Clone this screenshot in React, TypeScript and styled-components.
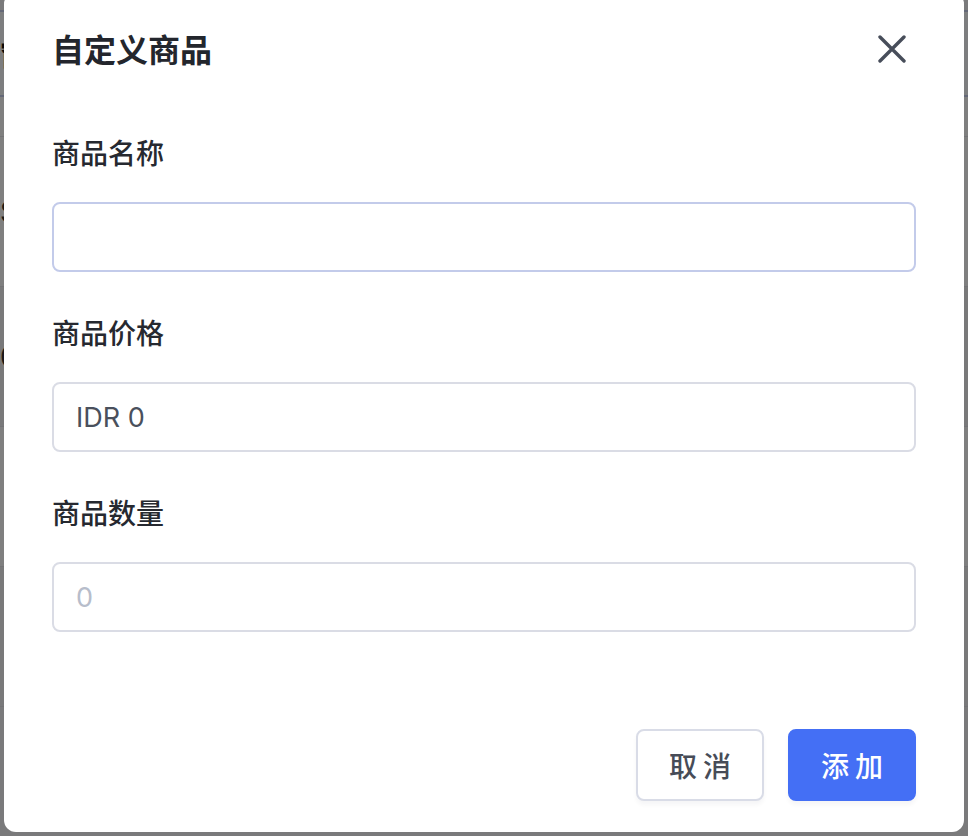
import React, { useState } from "react";
import styled, { createGlobalStyle } from "styled-components";

const GlobalStyle = createGlobalStyle`
  html, body {
    margin: 0;
    padding: 0;
    background: #ffffff;
    font-family: Inter, "Noto Sans CJK SC", "Noto Sans", sans-serif;
  }
  * { box-sizing: border-box; }
`;

// page behind the dialog, only a sliver is visible at the edges
const Page = styled.div`
  height: 836px;
  display: flex;
  flex-direction: column;
  background: #f4f4f6;
`;

const TopBar = styled.div`
  height: 87px;
  margin-top: 10px;
  border-top: 2px solid #c9d1ef;
  border-bottom: 2px solid #c9d1ef;
  background: #fbfcff;
  display: flex;
  align-items: center;
  font-size: 28px;
  font-weight: 700;
  color: #111;
`;

const PageRow = styled.div<{ $h: number; $shade?: boolean }>`
  height: ${(p) => p.$h}px;
  border-bottom: 1px solid #e6e7ec;
  background: ${(p) => (p.$shade ? "#f2f2f4" : "#ffffff")};
  font-size: 28px;
  color: #333;
  display: flex;
  align-items: center;
`;

const Overlay = styled.div`
  position: fixed;
  inset: 0;
  background: rgba(0, 0, 0, 0.5);
  display: flex;
  justify-content: center;
  align-items: flex-end;
  padding: 0 4px 4px;
`;

const Dialog = styled.div`
  width: 960px;
  height: 840px;
  flex-shrink: 0;
  background: #ffffff;
  border-radius: 12px;
  padding: 37px 48px 31px;
  display: flex;
  flex-direction: column;
`;

const Header = styled.div`
  display: flex;
  align-items: center;
  justify-content: space-between;
  height: 44px;
`;

const Title = styled.h2`
  margin: 0;
  font-size: 32px;
  line-height: 44px;
  font-weight: 600;
  color: #23262d;
`;

const CloseButton = styled.button`
  width: 44px;
  height: 44px;
  margin-right: 2px;
  margin-top: -4px;
  border: none;
  background: transparent;
  padding: 0;
  display: flex;
  align-items: center;
  justify-content: center;
  cursor: pointer;
`;

const Form = styled.div`
  margin-top: 61px;
  display: flex;
  flex-direction: column;
  gap: 42px;
`;

const Field = styled.div`
  display: flex;
  flex-direction: column;
  gap: 28px;
`;

const Label = styled.label`
  font-size: 28px;
  line-height: 40px;
  font-weight: 500;
  color: #262930;
`;

const Input = styled.input<{ $focus?: boolean }>`
  height: 70px;
  width: 100%;
  border: 2px solid ${(p) => (p.$focus ? "#c3cbea" : "#dadce5")};
  border-radius: 8px;
  padding: 0 22px;
  font-family: Inter, "Noto Sans CJK SC", sans-serif;
  font-size: 27px;
  color: #4a505c;
  outline: none;
  background: #ffffff;

  &::placeholder {
    color: #b7bdcb;
  }
`;

const Footer = styled.div`
  margin-top: auto;
  display: flex;
  justify-content: flex-end;
  gap: 24px;
`;

const Button = styled.button<{ $primary?: boolean }>`
  height: 72px;
  width: 128px;
  border-radius: 8px;
  border: 2px solid ${(p) => (p.$primary ? "#446ff5" : "#d9dce7")};
  background: ${(p) => (p.$primary ? "#446ff5" : "#ffffff")};
  color: ${(p) => (p.$primary ? "#ffffff" : "#474c57")};
  font-family: Inter, "Noto Sans CJK SC", sans-serif;
  font-size: 28px;
  font-weight: 500;
  letter-spacing: 6px;
  padding: 0 0 0 6px;
  box-shadow: 0 4px 4px rgba(20, 30, 60, 0.04);
  cursor: pointer;
`;

function CloseIcon() {
  return (
    <svg width="28" height="28" viewBox="0 0 28 28" fill="none">
      <path d="M2 2L26 26M26 2L2 26" stroke="#474d5a" strokeWidth="3.4" strokeLinecap="round" />
    </svg>
  );
}

export default function App() {
  const [name, setName] = useState("");
  const [price, setPrice] = useState("IDR 0");
  const [qty, setQty] = useState("");

  return (
    <>
      <GlobalStyle />
      <Page>
        <TopBar>窗</TopBar>
        <PageRow $h={40} />
        <PageRow $h={150}>S</PageRow>
        <PageRow $h={140} $shade>0</PageRow>
        <PageRow $h={140} />
        <PageRow $h={140} $shade />
      </Page>
      <Overlay>
        <Dialog>
          <Header>
            <Title>自定义商品</Title>
            <CloseButton aria-label="close">
              <CloseIcon />
            </CloseButton>
          </Header>
          <Form>
            <Field>
              <Label>商品名称</Label>
              <Input $focus value={name} onChange={(e) => setName(e.target.value)} />
            </Field>
            <Field>
              <Label>商品价格</Label>
              <Input value={price} onChange={(e) => setPrice(e.target.value)} />
            </Field>
            <Field>
              <Label>商品数量</Label>
              <Input placeholder="0" value={qty} onChange={(e) => setQty(e.target.value)} />
            </Field>
          </Form>
          <Footer>
            <Button>取消</Button>
            <Button $primary>添加</Button>
          </Footer>
        </Dialog>
      </Overlay>
    </>
  );
}
